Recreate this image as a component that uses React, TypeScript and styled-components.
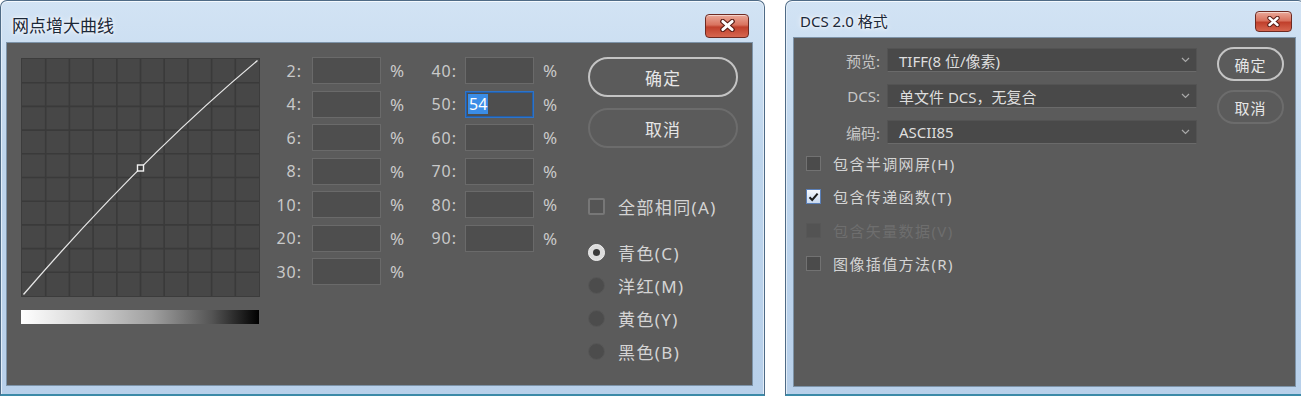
import React from "react";
import styled, { createGlobalStyle } from "styled-components";

const GlobalStyle = createGlobalStyle`
  html, body {
    margin: 0;
    padding: 0;
    background: #ffffff;
    overflow: hidden;
  }
  body {
    font-family: "Noto Sans", "Noto Sans CJK SC", sans-serif;
  }
`;

const Page = styled.div`
  display: flex;
  gap: 20px;
  width: 1301px;
  height: 396px;
  overflow: hidden;
`;

const Window = styled.div<{ $width: number; $pad: string }>`
  flex: none;
  box-sizing: border-box;
  width: ${(p) => p.$width}px;
  height: 396px;
  display: flex;
  flex-direction: column;
  padding: ${(p) => p.$pad};
  border: 1px solid #4f6b86;
  border-bottom: 2px solid #3c8aa8;
  border-radius: 7px 7px 0 0;
  background: linear-gradient(180deg, #d2e3f4 0%, #bed5ec 40%, #b8d0ea 100%);
  box-shadow: inset 0 1px 0 #f4f9fe, inset 1px 0 0 #e2edf8, inset -1px 0 0 #e2edf8;
`;

const TitleBar = styled.div<{ $height: number; $top: number; $left: number; $right: number }>`
  flex: none;
  box-sizing: border-box;
  height: ${(p) => p.$height}px;
  display: flex;
  align-items: center;
  justify-content: space-between;
  padding: ${(p) => `${p.$top}px ${p.$right}px 0 ${p.$left}px`};
`;

const Title = styled.div<{ $size: number }>`
  font-size: ${(p) => p.$size}px;
  line-height: 1;
  color: #1b2838;
  text-shadow: 0 0 6px #ffffff, 0 0 3px #ffffff;
`;

const CloseButton = styled.div<{ $w: number; $h: number }>`
  box-sizing: border-box;
  width: ${(p) => p.$w}px;
  height: ${(p) => p.$h}px;
  display: flex;
  align-items: center;
  justify-content: center;
  border: 1px solid #6e2a22;
  border-radius: 4px;
  background: linear-gradient(180deg, #eaa898 0%, #d9735f 45%, #c0402c 55%, #d6664f 100%);
  box-shadow: inset 0 1px 0 rgba(255, 255, 255, 0.5);
`;

const Body = styled.div<{ $pad: string }>`
  flex: 1;
  display: flex;
  box-sizing: border-box;
  padding: ${(p) => p.$pad};
  background: #5b5b5b;
  border: 1px solid #7d93a8;
  color: #cfcfcf;
`;

/* ---------- left dialog ---------- */

const CurveColumn = styled.div`
  flex: none;
  display: flex;
  flex-direction: column;
  gap: 13px;
`;

const CurveFrame = styled.div`
  width: 239px;
  height: 239px;
  box-sizing: border-box;
  border: 1px solid #3c3c3c;
`;

const GrayRamp = styled.div`
  width: 238px;
  height: 14px;
  background: linear-gradient(90deg, #ffffff 0%, #d8d8d8 25%, #a0a0a0 55%, #555555 80%, #000000 100%);
`;

const FieldsArea = styled.div`
  flex: none;
  display: flex;
  gap: 12px;
  margin: -1px 0 0 8px;
`;

const FieldColumn = styled.div`
  display: flex;
  flex-direction: column;
  gap: 6.5px;
`;

const FieldRow = styled.div`
  display: flex;
  align-items: center;
  height: 27px;
`;

const FieldLabel = styled.span<{ $width: number; $gap: number }>`
  width: ${(p) => p.$width}px;
  margin-right: ${(p) => p.$gap}px;
  text-align: right;
  font-size: 16px;
  letter-spacing: 1px;
  color: #c9c9c9;
`;

const NumBox = styled.div<{ $focused?: boolean }>`
  box-sizing: border-box;
  width: 69px;
  height: 27px;
  display: flex;
  align-items: center;
  padding-left: 2px;
  background: #4e4e4e;
  border: 1px solid ${(p) => (p.$focused ? "#2d73c9" : "#6a6a6a")};
  box-shadow: ${(p) => (p.$focused ? "inset 0 0 0 1px #245ea6" : "none")};
`;

const Selected = styled.span`
  background: #3b8de6;
  color: #ffffff;
  font-size: 16px;
  line-height: 20px;
  padding: 0 1px;
`;

const Percent = styled.span`
  width: 18px;
  margin-left: 9px;
  font-size: 17px;
  color: #c9c9c9;
`;

const SideColumn = styled.div`
  flex: none;
  display: flex;
  flex-direction: column;
  margin: -1px 0 0 27px;
  width: 150px;
`;

const PillButton = styled.div<{ $primary?: boolean; $w: number; $h: number; $size: number }>`
  box-sizing: border-box;
  width: ${(p) => p.$w}px;
  height: ${(p) => p.$h}px;
  display: flex;
  align-items: center;
  justify-content: center;
  border-radius: ${(p) => p.$h / 2}px;
  border: 2px solid ${(p) => (p.$primary ? "#c4c4c4" : "#6c6c6c")};
  font-size: ${(p) => p.$size}px;
  letter-spacing: 1px;
  color: #e6e6e6;
`;

const ButtonStack = styled.div<{ $gap: number }>`
  display: flex;
  flex-direction: column;
  gap: ${(p) => p.$gap}px;
`;

const OptionRow = styled.div<{ $size: number; $gap: number; $dim?: boolean }>`
  display: flex;
  align-items: center;
  height: 20px;
  gap: ${(p) => p.$gap}px;
  font-size: ${(p) => p.$size}px;
  letter-spacing: 1.4px;
  color: ${(p) => (p.$dim ? "#6e6e6e" : "#d4d4d4")};
  white-space: nowrap;
`;

const SameRow = styled.div`
  margin-top: 48px;
`;

const BigCheck = styled.div`
  box-sizing: border-box;
  width: 17px;
  height: 17px;
  border: 2px solid #777777;
  border-radius: 2px;
  background: #555555;
`;

const RadioGroup = styled.div`
  display: flex;
  flex-direction: column;
  gap: 13px;
  margin-top: 26px;
`;

const Radio = styled.div<{ $on?: boolean }>`
  box-sizing: border-box;
  width: 17px;
  height: 17px;
  border-radius: 50%;
  display: flex;
  align-items: center;
  justify-content: center;
  background: ${(p) => (p.$on ? "#dcdcdc" : "#4c4c4c")};
  border: 1px solid ${(p) => (p.$on ? "#f0f0f0" : "#575757")};
  &::after {
    content: "";
    display: ${(p) => (p.$on ? "block" : "none")};
    width: 7px;
    height: 7px;
    border-radius: 50%;
    background: #3a3a3a;
  }
`;

/* ---------- right dialog ---------- */

const FormPane = styled.div`
  display: flex;
  flex-direction: column;
  padding-top: 10px;
`;

const FormRows = styled.div`
  display: flex;
  flex-direction: column;
  gap: 12px;
`;

const FormRow = styled.div`
  display: flex;
  align-items: center;
  gap: 7px;
`;

const FormLabel = styled.span`
  width: 86px;
  text-align: right;
  font-size: 15px;
  color: #c6c6c6;
`;

const SelectBox = styled.div`
  box-sizing: border-box;
  width: 310px;
  height: 24px;
  display: flex;
  align-items: center;
  justify-content: space-between;
  padding: 0 6px 0 11px;
  background: #494949;
  border: 1px solid #535353;
  border-bottom-color: #6a6a6a;
  font-size: 15px;
  color: #dedede;
  white-space: nowrap;
`;

const CheckList = styled.div`
  display: flex;
  flex-direction: column;
  gap: 13.5px;
  margin-top: 9px;
  padding-left: 12px;
`;

const SmallCheck = styled.div<{ $dim?: boolean }>`
  box-sizing: border-box;
  width: 15px;
  height: 15px;
  display: flex;
  align-items: center;
  justify-content: center;
  border: 1px solid ${(p) => (p.$dim ? "#575757" : "#727272")};
  background: ${(p) => (p.$dim ? "#535353" : "#4b4b4b")};
`;

const OnCheck = styled.div`
  box-sizing: border-box;
  width: 15px;
  height: 15px;
  display: flex;
  align-items: center;
  justify-content: center;
  border: 1px solid #5a7fb8;
  background: linear-gradient(180deg, #f6f9fd 0%, #c9d9ef 100%);
`;

const RightButtons = styled.div`
  margin: 9px 0 0 20px;
`;

const CloseIcon = ({ w, h }: { w: number; h: number }) => (
  <svg width={w} height={h} viewBox="0 0 14 11">
    <path d="M3 2L11 9M11 2L3 9" stroke="#5a1d16" strokeWidth="4.4" strokeLinecap="round" />
    <path d="M3 2L11 9M11 2L3 9" stroke="#ffffff" strokeWidth="2.4" strokeLinecap="round" />
  </svg>
);

const Chevron = () => (
  <svg width="9" height="6" viewBox="0 0 9 6">
    <path d="M1 1l3.5 3.5L8 1" fill="none" stroke="#a9a9a9" strokeWidth="1.2" />
  </svg>
);

const CheckMark = () => (
  <svg width="11" height="10" viewBox="0 0 11 10">
    <path d="M1.5 5.2L4.2 8L9.6 1.6" fill="none" stroke="#1c1c1c" strokeWidth="2" />
  </svg>
);

const CurveGraph = () => {
  const size = 237;
  const step = size / 10;
  const ticks = Array.from({ length: 9 }, (_, i) => (i + 1) * step);
  return (
    <svg width={size} height={size}>
      <rect width={size} height={size} fill="#474747" />
      {ticks.map((t) => (
        <g key={t}>
          <line x1={t} y1={0} x2={t} y2={size} stroke="#3a3a3a" strokeWidth="1.6" />
          <line x1={0} y1={t} x2={size} y2={t} stroke="#3a3a3a" strokeWidth="1.6" />
        </g>
      ))}
      <path d="M1.5 235.5 Q118.5 99.5 235.5 1.5" fill="none" stroke="#e6e6e6" strokeWidth="1.3" />
      <rect x={115.5} y={106} width={6} height={6} fill="#3c3c3c" stroke="#f2f2f2" strokeWidth="1.4" />
    </svg>
  );
};

const leftFields = ["2", "4", "6", "8", "10", "20", "30"];
const rightFields = ["40", "50", "60", "70", "80", "90"];
const inks = ["青色(C)", "洋红(M)", "黄色(Y)", "黑色(B)"];

const DotGainDialog = () => (
  <Window $width={765} $pad="0 11px 8px 5px">
    <TitleBar $height={41} $top={8} $left={6} $right={4}>
      <Title $size={17}>网点增大曲线</Title>
      <CloseButton $w={44} $h={24}>
        <CloseIcon w={17} h={13} />
      </CloseButton>
    </TitleBar>
    <Body $pad="15px 0 0 14px">
      <CurveColumn>
        <CurveFrame>
          <CurveGraph />
        </CurveFrame>
        <GrayRamp />
      </CurveColumn>
      <FieldsArea>
        <FieldColumn>
          {leftFields.map((f) => (
            <FieldRow key={f}>
              <FieldLabel $width={34} $gap={10}>{f}:</FieldLabel>
              <NumBox />
              <Percent>%</Percent>
            </FieldRow>
          ))}
        </FieldColumn>
        <FieldColumn>
          {rightFields.map((f) => (
            <FieldRow key={f}>
              <FieldLabel $width={37} $gap={8}>{f}:</FieldLabel>
              <NumBox $focused={f === "50"}>{f === "50" && <Selected>54</Selected>}</NumBox>
              <Percent>%</Percent>
            </FieldRow>
          ))}
        </FieldColumn>
      </FieldsArea>
      <SideColumn>
        <ButtonStack $gap={11}>
          <PillButton $primary $w={150} $h={40} $size={17}>确定</PillButton>
          <PillButton $w={150} $h={40} $size={17}>取消</PillButton>
        </ButtonStack>
        <SameRow>
          <OptionRow $size={17} $gap={13}>
            <BigCheck />
            全部相同(A)
          </OptionRow>
        </SameRow>
        <RadioGroup>
          {inks.map((ink, i) => (
            <OptionRow key={ink} $size={17} $gap={13}>
              <Radio $on={i === 0} />
              {ink}
            </OptionRow>
          ))}
        </RadioGroup>
      </SideColumn>
    </Body>
  </Window>
);

const options = [
  { label: "包含半调网屏(H)", state: "off" },
  { label: "包含传递函数(T)", state: "on" },
  { label: "包含矢量数据(V)", state: "dim" },
  { label: "图像插值方法(R)", state: "off" },
];

const DcsDialog = () => (
  <Window $width={520} $pad="0 8px 7px 7px">
    <TitleBar $height={36} $top={4} $left={7} $right={4}>
      <Title $size={15}>DCS 2.0 格式</Title>
      <CloseButton $w={37} $h={21}>
        <CloseIcon w={15} h={11} />
      </CloseButton>
    </TitleBar>
    <Body $pad="0">
      <FormPane>
        <FormRows>
          <FormRow>
            <FormLabel>预览:</FormLabel>
            <SelectBox>TIFF(8 位/像素)<Chevron /></SelectBox>
          </FormRow>
          <FormRow>
            <FormLabel>DCS:</FormLabel>
            <SelectBox>单文件 DCS，无复合<Chevron /></SelectBox>
          </FormRow>
          <FormRow>
            <FormLabel>编码:</FormLabel>
            <SelectBox>ASCII85<Chevron /></SelectBox>
          </FormRow>
        </FormRows>
        <CheckList>
          {options.map((o) => (
            <OptionRow key={o.label} $size={15} $gap={12} $dim={o.state === "dim"}>
              {o.state === "on" ? (
                <OnCheck>
                  <CheckMark />
                </OnCheck>
              ) : (
                <SmallCheck $dim={o.state === "dim"} />
              )}
              {o.label}
            </OptionRow>
          ))}
        </CheckList>
      </FormPane>
      <RightButtons>
        <ButtonStack $gap={9}>
          <PillButton $primary $w={67} $h={34} $size={15}>确定</PillButton>
          <PillButton $w={67} $h={34} $size={15}>取消</PillButton>
        </ButtonStack>
      </RightButtons>
    </Body>
  </Window>
);

export default function App() {
  return (
    <>
      <GlobalStyle />
      <Page>
        <DotGainDialog />
        <DcsDialog />
      </Page>
    </>
  );
}
